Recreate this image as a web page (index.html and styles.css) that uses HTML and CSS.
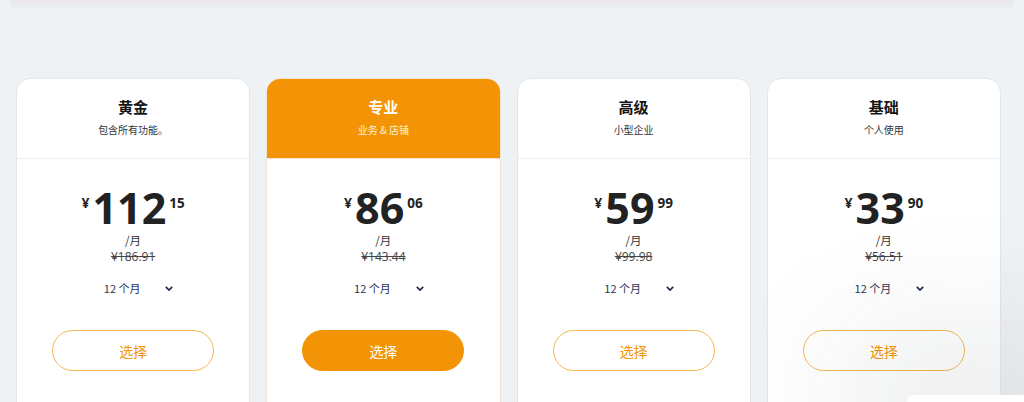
FILE: index.html
```html
<!DOCTYPE html>
<html lang="zh">
<head>
<meta charset="utf-8">
<link rel="stylesheet" href="styles.css">
</head>
<body>
<div class="topbar"></div>
<main class="plans">
  <section class="card">
    <header class="card-head"><h2>黄金</h2><p>包含所有功能。</p></header>
    <div class="card-body">
      <div class="price"><span class="cur">¥</span><span class="int">112</span><span class="dec">15</span></div>
      <div class="per">/月</div>
      <div class="old">¥186.91</div>
      <div class="term"><span>12 个月</span><svg viewBox="0 0 10 6" width="8" height="5"><path d="M1 1l4 4 4-4" fill="none" stroke="#1e2747" stroke-width="2"/></svg></div>
      <button class="btn">选择</button>
    </div>
  </section>
  <section class="card featured">
    <header class="card-head"><h2>专业</h2><p>业务 &amp; 店铺</p></header>
    <div class="card-body">
      <div class="price"><span class="cur">¥</span><span class="int">86</span><span class="dec">06</span></div>
      <div class="per">/月</div>
      <div class="old">¥143.44</div>
      <div class="term"><span>12 个月</span><svg viewBox="0 0 10 6" width="8" height="5"><path d="M1 1l4 4 4-4" fill="none" stroke="#1e2747" stroke-width="2"/></svg></div>
      <button class="btn">选择</button>
    </div>
  </section>
  <section class="card">
    <header class="card-head"><h2>高级</h2><p>小型企业</p></header>
    <div class="card-body">
      <div class="price"><span class="cur">¥</span><span class="int">59</span><span class="dec">99</span></div>
      <div class="per">/月</div>
      <div class="old">¥99.98</div>
      <div class="term"><span>12 个月</span><svg viewBox="0 0 10 6" width="8" height="5"><path d="M1 1l4 4 4-4" fill="none" stroke="#1e2747" stroke-width="2"/></svg></div>
      <button class="btn">选择</button>
    </div>
  </section>
  <section class="card">
    <header class="card-head"><h2>基础</h2><p>个人使用</p></header>
    <div class="card-body">
      <div class="price"><span class="cur">¥</span><span class="int">33</span><span class="dec">90</span></div>
      <div class="per">/月</div>
      <div class="old">¥56.51</div>
      <div class="term"><span>12 个月</span><svg viewBox="0 0 10 6" width="8" height="5"><path d="M1 1l4 4 4-4" fill="none" stroke="#1e2747" stroke-width="2"/></svg></div>
      <button class="btn">选择</button>
    </div>
  </section>
</main>
<div class="popup"></div>
</body>
</html>
```

FILE: styles.css
```css
* { box-sizing: border-box; }
html, body { margin: 0; height: 402px; overflow: hidden; }
body {
  background: #eff2f4;
  font-family: "Open Sans", "Noto Sans CJK SC", sans-serif;
  color: #1f1f1f;
  position: relative;
}
.topbar {
  height: 4px;
  margin: 0 10px;
  background: #eae8ec;
  border-radius: 0 0 6px 6px;
  box-shadow: 0 2px 5px rgba(0,0,0,0.06);
}
.plans {
  display: grid;
  grid-template-columns: repeat(4, 1fr);
  gap: 16px;
  padding: 74px 23px 0 16px;
}
.card {
  background: #fff;
  border: 1px solid #e4e7ea;
  border-radius: 14px;
  overflow: hidden;
  height: 360px;
}
.card-head {
  height: 80px;
  border-bottom: 1px solid #eceef0;
  text-align: center;
  padding-top: 17px;
}
.card-head h2 {
  margin: 0;
  font-family: "Noto Sans CJK SC", sans-serif;
  font-size: 15px;
  font-weight: 700;
  line-height: 22px;
  color: #151515;
}
.card-head p {
  margin: 5px 0 0;
  font-family: "Noto Sans CJK SC", sans-serif;
  font-size: 10px;
  line-height: 14px;
  color: #333;
}
.featured { border-color: #f0e4d2; }
.featured .card-head { background: #f39406; border-bottom-color: #f0e6d8; }
.featured .card-head h2 { color: #fff; }
.featured .card-head p { color: #fdf0dd; }
.card-body {
  display: flex;
  flex-direction: column;
  align-items: center;
  padding-top: 23px;
}
.price {
  display: flex;
  align-items: flex-start;
  font-weight: 700;
  color: #222;
  height: 50px;
  padding-top: 4px;
}
.cur { font-size: 14px; line-height: 18px; margin-top: 8px; margin-right: 3px; }
.int { font-size: 43px; line-height: 44px; }
.dec { font-size: 13.5px; line-height: 18px; margin-top: 8px; margin-left: 3px; }
.per {
  font-family: "Noto Sans CJK SC", sans-serif;
  font-size: 11.5px;
  line-height: 16px;
  color: #333;
}
.old {
  font-size: 12px;
  line-height: 17px;
  color: #444;
  text-decoration: line-through;
}
.term {
  display: flex;
  align-items: center;
  gap: 25px;
  margin-top: 15px;
  margin-left: 11px;
  font-family: "Noto Sans CJK SC", sans-serif;
  font-size: 11px;
  color: #2a3250;
  height: 16px;
}
.btn {
  margin-top: 34px;
  width: 162px;
  height: 41px;
  border-radius: 21px;
  border: 1px solid #f6b654;
  background: #fff;
  color: #f39406;
  font-family: "Noto Sans CJK SC", sans-serif;
  font-size: 14px;
}
.featured .btn { background: #f39406; border-color: #f39406; color: #fff; }
.popup {
  position: absolute;
  left: 907px;
  top: 395px;
  width: 117px;
  height: 7px;
  background: #fff;
  border-radius: 8px 0 0 0;
  box-shadow: 0 0 140px 60px rgba(40,50,60,0.10);
}
```
